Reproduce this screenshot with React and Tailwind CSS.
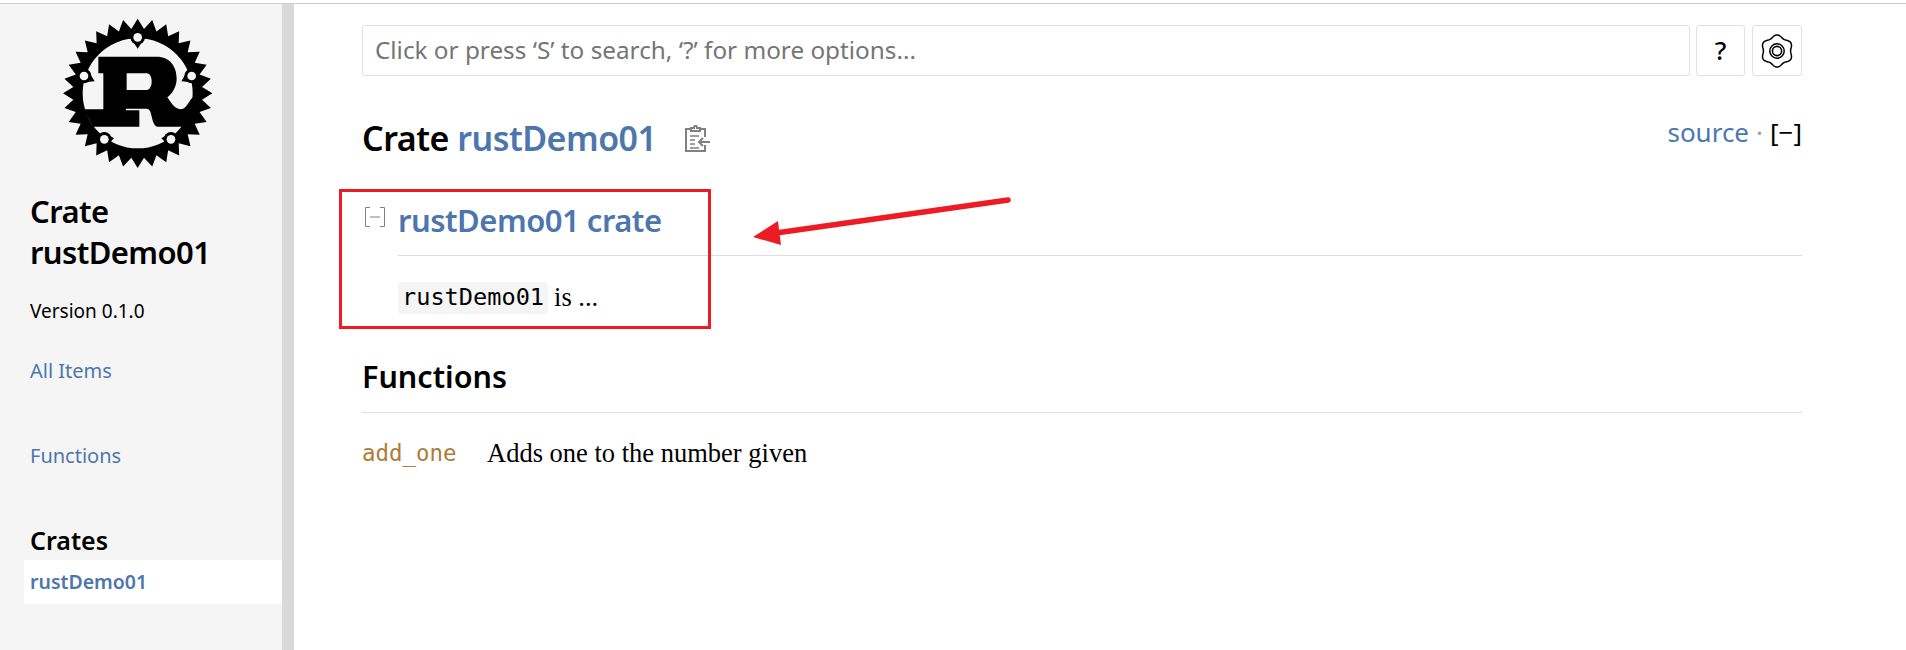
const sans = { fontFamily: '"Noto Sans", sans-serif' };
const mono = { fontFamily: '"DejaVu Sans Mono", monospace' };
const serif = { fontFamily: '"Liberation Serif", serif' };

// gear outline for the rust logo, in the logo's 540x510 viewBox
function gearPath() {
  const cx = 263;
  const cy = 250;
  const teeth = 32;
  let d = '';
  for (let i = 0; i < teeth; i++) {
    const a = (i / teeth) * Math.PI * 2 - Math.PI / 2;
    const b = a + Math.PI / teeth;
    const cmd = i === 0 ? 'M' : 'L';
    d += `${cmd}${cx + 224 * Math.cos(a)} ${cy + 224 * Math.sin(a)}L${cx + 194 * Math.cos(b)} ${cy + 194 * Math.sin(b)}`;
  }
  d += 'Z';
  d += `M${cx - 165} ${cy}A165 165 0 1 0 ${cx + 165} ${cy}A165 165 0 1 0 ${cx - 165} ${cy}Z`;
  return d;
}

function wheelPath() {
  let d = '';
  for (let i = 0; i < 120; i++) {
    const t = (i / 120) * Math.PI * 2;
    const r = 14.8 * (1 + 0.085 * Math.cos(6 * t));
    d += `${i === 0 ? 'M' : 'L'}${17 + r * Math.sin(t)} ${17 - r * Math.cos(t)}`;
  }
  return d + 'Z';
}

function RustLogo() {
  const rivets = [
    [263, 82, 263, 116],
    [102, 198, 134, 214],
    [425, 198, 394, 214],
    [163, 388, 192, 385],
    [363, 388, 334, 385],
  ];
  return (
    <svg viewBox="0 0 540 510" className="block w-[180px] h-[170px]">
      <path d={gearPath()} fill="#000" fillRule="evenodd" />
      <path
        fillRule="evenodd"
        fill="#000"
        d="M145 140L320 140C360 140 380 170 380 205C380 230 368 250 352 262C362 275 372 297 392 298C408 298 412 280 428 262L445 300L420 350L130 350L100 298L160 298L160 190L145 190ZM230 190L230 240L290 240C310 240 310 190 290 190Z"
      />
      <path d="M228 296H290C310 296 300 345 325 352H268V301H228Z" fill="#f5f5f5" />
      {rivets.map(([x, y, tx, ty]) => {
        const dx = tx - x;
        const dy = ty - y;
        const len = Math.hypot(dx, dy);
        const nx = (-dy / len) * 22;
        const ny = (dx / len) * 22;
        return (
          <g key={x}>
            <path d={`M${x + nx} ${y + ny}L${tx} ${ty}L${x - nx} ${y - ny}Z`} fill="#000" />
            <circle cx={x} cy={y} r="22" fill="#000" />
            <circle cx={x} cy={y} r="13" fill="#f5f5f5" />
          </g>
        );
      })}
    </svg>
  );
}

function ClipboardIcon() {
  return (
    <svg viewBox="0 0 26 28" className="w-[26px] h-[28px] ml-[27px] mt-[2px]" fill="none" stroke="#808080" strokeWidth="2">
      <path d="M6 4H2V26H21V20M21 12V4H17" />
      <path d="M7 5V3H10C10 0 13 0 13 3H16V6H7Z" />
      <path d="M6 11H15M6 15H11M6 19H11M6 23H15" strokeWidth="1.6" />
      <path d="M26 17H15M19 13L15 17L19 21" />
    </svg>
  );
}

function SettingsIcon() {
  return (
    <svg viewBox="0 0 34 34" className="w-[34px] h-[34px]" fill="none" stroke="#000">
      <path d={wheelPath()} strokeWidth="1.5" />
      <circle cx="17" cy="17" r="7.2" strokeWidth="1.5" />
      <circle cx="17" cy="17" r="4.6" strokeWidth="1.6" />
    </svg>
  );
}

function ToggleIcon() {
  return (
    <svg viewBox="0 0 20 20" className="w-[20px] h-[20px]" fill="none" stroke="#808080" strokeWidth="1">
      <path d="M5 .5H.5V19.5H5M15 .5H19.5V19.5H15M5 10H15" />
    </svg>
  );
}

export default function App() {
  return (
    <div className="relative w-[1906px] h-[650px] overflow-hidden bg-white text-black" style={sans}>
      <div className="h-[4px] bg-white border-b border-[#cccccc]" />
      <div className="flex h-[646px]">
        <aside className="w-[294px] shrink-0 bg-[#f5f5f5] border-r-[12px] border-[#d9d9d9]">
          <div className="ml-[50px] mt-[6px]">
            <RustLogo />
          </div>
          <h2 className="ml-[30px] mt-[11px] text-[31px] leading-[41px] font-semibold tracking-[-0.6px]">
            Crate
            <br />
            rustDemo01
          </h2>
          <p className="ml-[30px] mt-[24px] text-[19px] leading-[28px]">Version 0.1.0</p>
          <p className="ml-[30px] mt-[32px] text-[20px] leading-[28px] text-[#4d76ae]">All Items</p>
          <p className="ml-[30px] mt-[57px] text-[20px] leading-[28px] text-[#4d76ae]">Functions</p>
          <p className="ml-[30px] mt-[52px] text-[25px] leading-[36px] font-semibold">Crates</p>
          <div className="ml-[24px] mt-[2px] h-[44px] bg-white pl-[6px] flex items-center text-[19.5px] font-semibold text-[#4d76ae]">
            rustDemo01
          </div>
        </aside>

        <main className="flex-1 pl-[68px] pr-[104px]">
          <div className="flex mt-[21px] gap-[6px]">
            <div className="flex-1 h-[51px] border border-[#e0e0e0] rounded-[3px] flex items-center pl-[12px] text-[24.3px] text-[#757575]">
              Click or press ‘S’ to search, ‘?’ for more options...
            </div>
            <div className="w-[49px] h-[51px] border border-[#e0e0e0] rounded-[3px] flex items-center justify-center text-[26px] font-medium">
              ?
            </div>
            <div className="w-[50px] h-[51px] ml-[1px] border border-[#e0e0e0] rounded-[3px] flex items-center justify-center">
              <SettingsIcon />
            </div>
          </div>

          <div className="flex items-center justify-between mt-[40px] h-[44px]">
            <div className="flex items-center">
              <h1 className="text-[34px] font-semibold leading-[44px] tracking-[-0.5px]">
                Crate <span className="text-[#4d76ae]">rustDemo01</span>
              </h1>
              <ClipboardIcon />
            </div>
            <div className="text-[26px] leading-[44px] -mt-[12px] flex items-center">
              <span className="text-[#4d76ae]">source</span>
              <span className="mx-[7px] text-[#999999]">·</span>
              <span>[−]</span>
            </div>
          </div>

          <div className="flex mt-[34px]">
            <div className="w-[36px] shrink-0 pt-[13px] pl-[3px]">
              <ToggleIcon />
            </div>
            <div className="flex-1">
              <div className="h-[62px] border-b border-[#dddddd] flex items-start pt-[6px]">
                <h2 className="text-[31px] leading-[40px] font-semibold text-[#4d76ae] tracking-[-0.5px]">rustDemo01 crate</h2>
              </div>
              <div className="flex items-center mt-[26px] h-[32px]">
                <code className="h-[32px] px-[4px] bg-[#f5f5f5] rounded-[4px] flex items-center text-[23.6px] font-normal" style={mono}>
                  rustDemo01
                </code>
                <span className="ml-[6px] text-[26.5px]" style={serif}>
                  is ...
                </span>
              </div>
            </div>
          </div>

          <h2 className="mt-[37px] h-[62px] border-b border-[#dddddd] text-[30.5px] leading-[50px] font-semibold">Functions</h2>

          <div className="flex items-center mt-[25px] h-[32px]">
            <span className="w-[125px] text-[#ad7c37] text-[22.4px]" style={mono}>
              add_one
            </span>
            <span className="text-[26.5px]" style={serif}>
              Adds one to the number given
            </span>
          </div>
        </main>
      </div>

      {/* annotation drawn over the page */}
      <div className="absolute left-[339px] top-[189px] w-[372px] h-[140px] border-[3px] border-[#ed1c24]" />
      <svg className="absolute left-[740px] top-[190px] w-[280px] h-[70px]" viewBox="0 0 280 70" fill="none">
        <path d="M268 10L36 43" stroke="#ed1c24" strokeWidth="5.5" strokeLinecap="round" />
        <path d="M13 47L38 31L41 55Z" fill="#ed1c24" />
      </svg>
    </div>
  );
}
